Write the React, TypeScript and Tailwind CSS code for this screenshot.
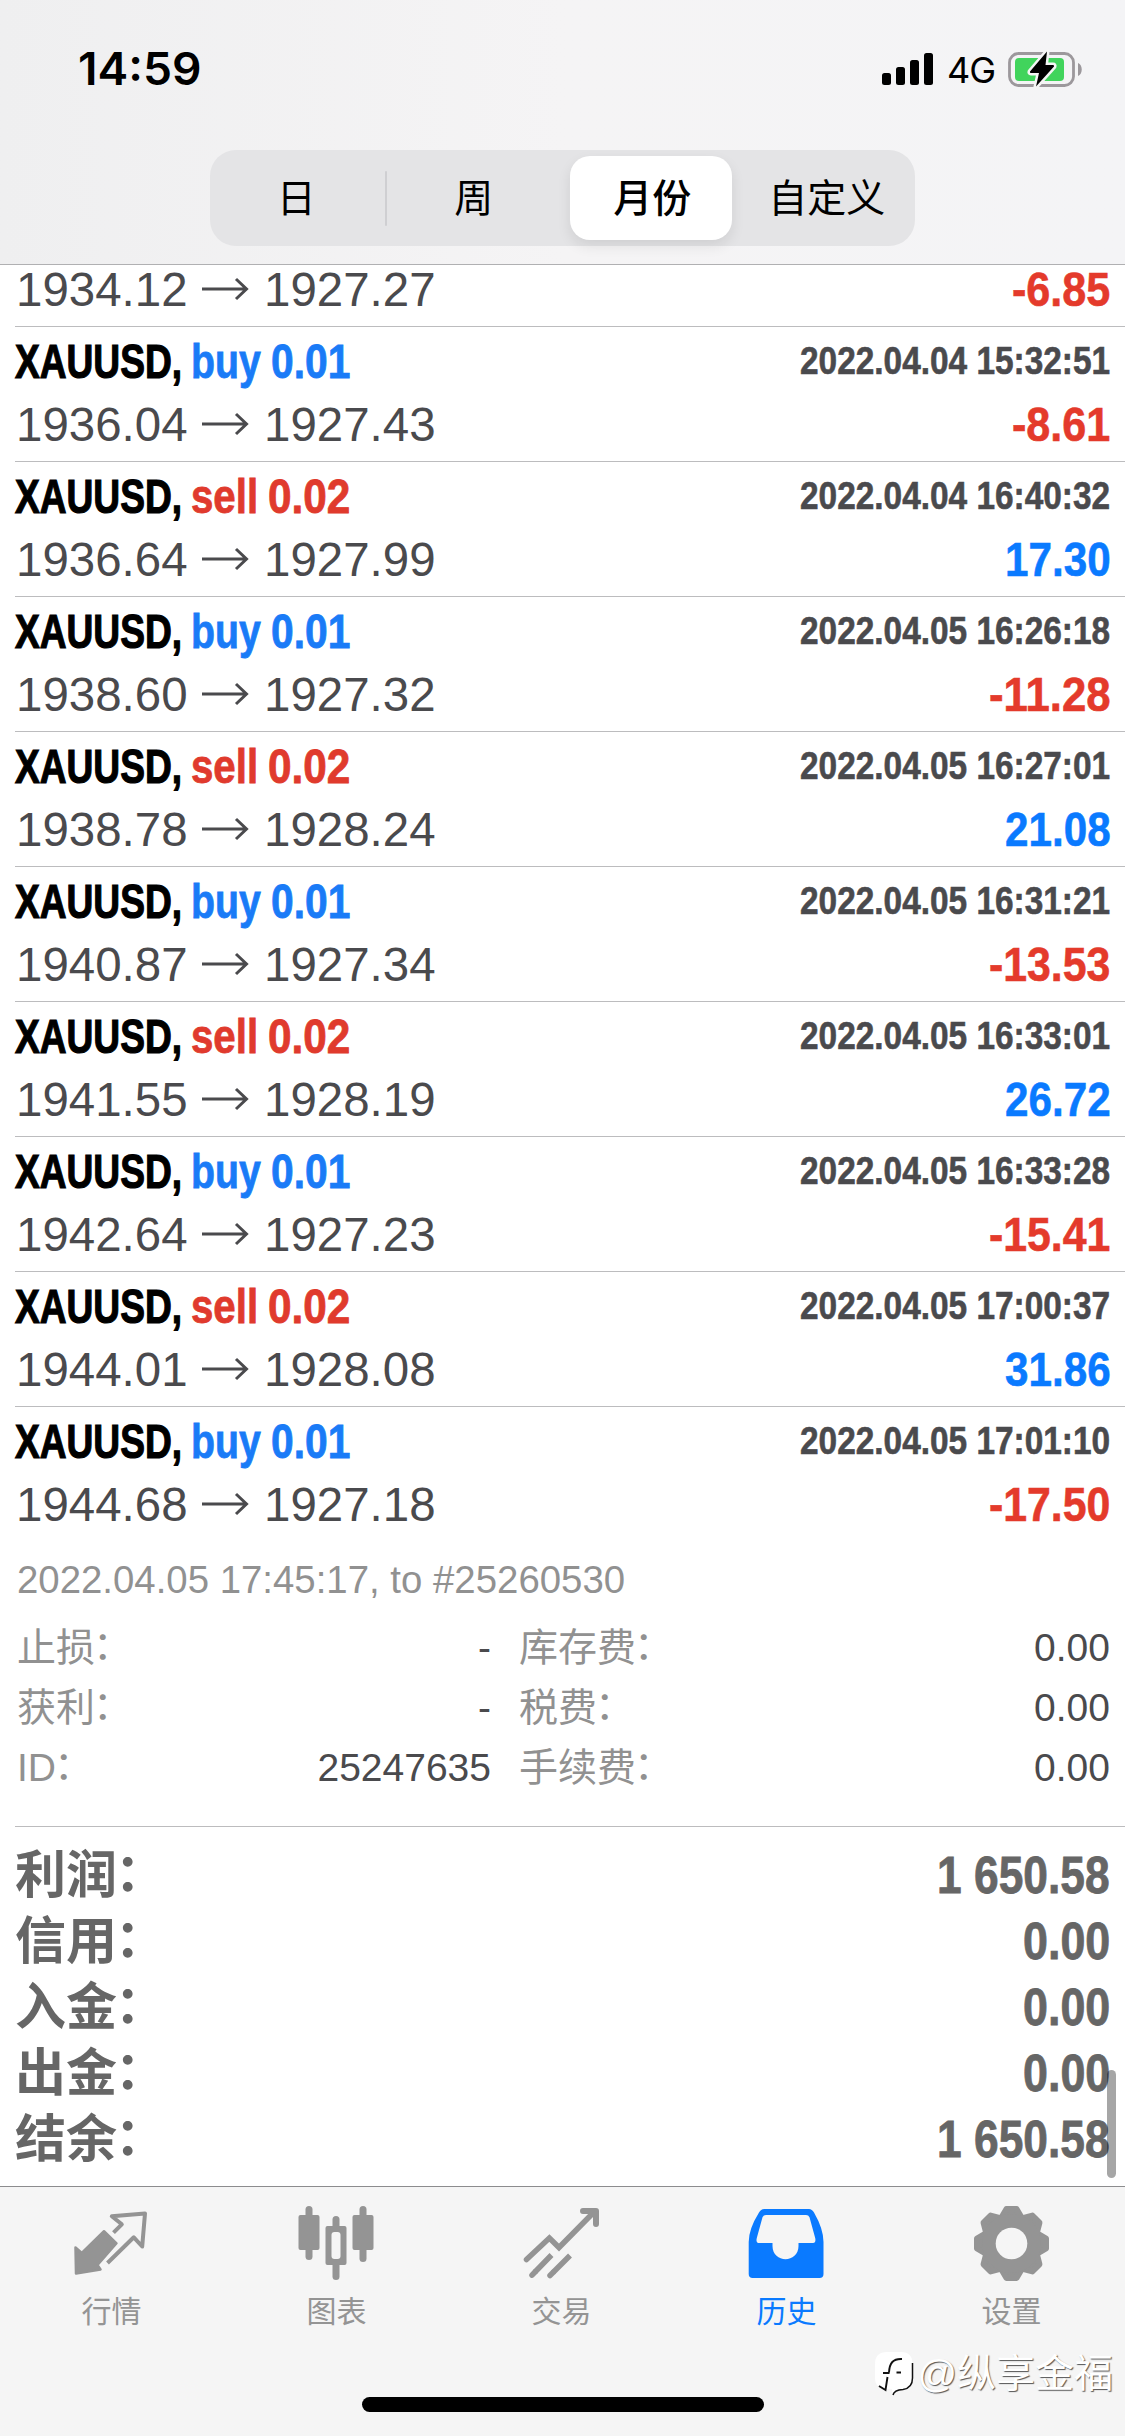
import { useLayoutEffect, useRef, useState } from "react";

type FitProps = { text: string; width: number; className?: string };

/** Condenses a run of text horizontally so that it takes exactly `width` pixels. */
function Fit({ text, width, className = "" }: FitProps) {
  const ref = useRef<HTMLSpanElement>(null);
  const [scale, setScale] = useState(1);
  useLayoutEffect(() => {
    if (ref.current) setScale(width / ref.current.offsetWidth);
  }, [text, width]);
  return (
    <span className="flex shrink-0" style={{ width }}>
      <span className={className} style={{ transform: `scaleX(${scale})`, transformOrigin: "left" }}>
        <span ref={ref} className="inline-block whitespace-pre">
          {text}
        </span>
      </span>
    </span>
  );
}

type Deal = { side: "buy" | "sell"; volume: string; time: string; open: string; close: string; profit: string };

const deals: Deal[] = [
  { side: "buy", volume: "0.01", time: "2022.04.04 15:32:51", open: "1936.04", close: "1927.43", profit: "-8.61" },
  { side: "sell", volume: "0.02", time: "2022.04.04 16:40:32", open: "1936.64", close: "1927.99", profit: "17.30" },
  { side: "buy", volume: "0.01", time: "2022.04.05 16:26:18", open: "1938.60", close: "1927.32", profit: "-11.28" },
  { side: "sell", volume: "0.02", time: "2022.04.05 16:27:01", open: "1938.78", close: "1928.24", profit: "21.08" },
  { side: "buy", volume: "0.01", time: "2022.04.05 16:31:21", open: "1940.87", close: "1927.34", profit: "-13.53" },
  { side: "sell", volume: "0.02", time: "2022.04.05 16:33:01", open: "1941.55", close: "1928.19", profit: "26.72" },
  { side: "buy", volume: "0.01", time: "2022.04.05 16:33:28", open: "1942.64", close: "1927.23", profit: "-15.41" },
  { side: "sell", volume: "0.02", time: "2022.04.05 17:00:37", open: "1944.01", close: "1928.08", profit: "31.86" },
  { side: "buy", volume: "0.01", time: "2022.04.05 17:01:10", open: "1944.68", close: "1927.18", profit: "-17.50" },
];

function profitWidth(profit: string) {
  const digits = profit.replace(/\D/g, "").length;
  return digits * 23.3 + 12.3 + (profit.startsWith("-") ? 15.7 : 0);
}

function Prices({ open, close, profit }: { open: string; close: string; profit: string }) {
  return (
    <div className="flex items-center justify-between">
      <div className="flex items-center pl-px text-[#4a4a4d]">
        <Fit text={open} width={172} />
        <svg className="mb-px ml-[13px] mr-[14px] h-[28px] w-[49px]" viewBox="0 0 49 28" fill="none" stroke="#4a4a4d" strokeWidth="3">
          <path d="M1 14H45.500M35 4L45.500 14L35 24" />
        </svg>
        <Fit text={close} width={172} />
      </div>
      <Fit
        text={profit}
        width={profitWidth(profit)}
        className={
          profit.startsWith("-")
            ? "font-bold text-[#e43a2b] [-webkit-text-stroke:0.6px_#e43a2b]"
            : "font-bold text-[#0a7aff] [-webkit-text-stroke:0.6px_#0a7aff]"
        }
      />
    </div>
  );
}

function DealRow({ deal, last }: { deal: Deal; last: boolean }) {
  const tone =
    deal.side === "buy"
      ? "font-bold text-[#1a7bf7] [-webkit-text-stroke:0.8px_#1a7bf7]"
      : "font-bold text-[#e03a2d] [-webkit-text-stroke:0.8px_#e03a2d]";
  return (
    <div className={last ? "ml-[15px] h-[135px] pr-[15px] pt-[3px]" : "ml-[15px] h-[135px] border-b border-[#bcbcbe] pr-[15px] pt-[3px]"}>
      <div className="flex h-[63px] items-start justify-between">
        <div className="flex text-[48px] leading-[63px]">
          <Fit text="XAUUSD," width={167} className="font-bold text-black [-webkit-text-stroke:1.2px_black]" />
          <span className="w-[9px]" />
          <Fit text={deal.side} width={deal.side === "buy" ? 69.5 : 67} className={tone} />
          <span className="w-[10px]" />
          <Fit text={deal.volume} width={deal.side === "buy" ? 79 : 82} className={tone} />
        </div>
        <Fit
          text={deal.time}
          width={310}
          className="text-[39px] font-bold leading-[61px] text-[#4a4a4d] [-webkit-text-stroke:0.6px_#4a4a4d]"
        />
      </div>
      <div className="text-[48px] leading-[63px]">
        <Prices open={deal.open} close={deal.close} profit={deal.profit} />
      </div>
    </div>
  );
}

function Label({ text, className = "" }: { text: string; className?: string }) {
  return (
    <span className={className}>
      {text}
      <span className="relative -left-[2px] -top-[2px]">：</span>
    </span>
  );
}

function DetailLine({ left, value, right, cost }: { left: string; value: string; right: string; cost: string }) {
  return (
    <div className="flex h-[60px] text-[39px] leading-[60px]">
      <div className="flex w-[474px] justify-between">
        <Label text={left} className="text-[#919191]" />
        <span className="text-[#4a4a4d]">{value}</span>
      </div>
      <div className="ml-[28px] flex flex-1 justify-between">
        <Label text={right} className="text-[#919191]" />
        <span className="text-[#4a4a4d]">{cost}</span>
      </div>
    </div>
  );
}

function TotalLine({ label, value }: { label: string; value: string }) {
  return (
    <div className="flex h-[66px] justify-between text-[51px] font-bold leading-[66px] text-[#666]">
      <Label text={label} />
      <Fit text={value} width={value.length > 4 ? 173 : 87} className="[-webkit-text-stroke:0.8px_#666]" />
    </div>
  );
}

function StatusBar() {
  return (
    <div className="flex h-[150px] justify-between pl-[78px] pr-[42px] pt-[39px]">
      <Fit text="14:59" width={123} className="font-[Inter] text-[45px] font-semibold leading-[60px]" />
      <div className="flex">
        <svg className="mt-[11px] h-[40px] w-[60px]" viewBox="0 0 60 40">
          <rect x="0" y="23" width="9" height="12" rx="2.5" />
          <rect x="14" y="17" width="9" height="18" rx="2.5" />
          <rect x="28" y="10" width="9" height="25" rx="2.5" />
          <rect x="42" y="3" width="9" height="32" rx="2.5" />
        </svg>
        <span className="ml-[5px] w-[61px] font-[Inter] text-[36px] leading-[62px] tracking-[-1px]">4G</span>
        <svg className="mt-[9px] h-[44px] w-[75px]" viewBox="0 0 75 44">
          <rect x="1.5" y="5.5" width="64" height="32" rx="9" fill="none" stroke="#9c989c" strokeWidth="2.8" />
          <path d="M70 15v13c5-2 5-11 0-13z" fill="#9c989c" />
          <rect x="7" y="10" width="49" height="23" rx="4" fill="#41d45c" />
          <path
            d="M39 3.500L22 23.500Q21.500 25 23 25H31L28 38.500L46 18.500Q46.500 17 45 17H37.500Z"
            fill="#000"
            stroke="#f5f5f5"
            strokeWidth="5"
            strokeLinejoin="round"
            paintOrder="stroke"
          />
        </svg>
      </div>
    </div>
  );
}

function Segments() {
  return (
    <div className="ml-[210px] flex h-24 w-[705px] items-center rounded-[26px] bg-[#e4e4e6] text-[39px]">
      <span className="w-[173px] pt-[2px] text-center">日</span>
      <span className="ml-[2px] h-[55px] w-[3px] rounded-full bg-[#cfcfd2]" />
      <span className="w-[172px] pl-px pt-[2px] text-center">周</span>
      <span className="ml-[11px] flex h-[84px] w-[162px] items-center justify-center rounded-[20px] bg-white pl-[3px] pt-[2px] font-medium shadow-[0_6px_14px_rgba(0,0,0,0.09)]">
        月份
      </span>
      <span className="ml-[7px] w-[177px] pt-[2px] text-center">自定义</span>
    </div>
  );
}

function QuotesIcon() {
  return (
    <svg className="h-20 w-[90px]" viewBox="0 0 90 80" fill="none" stroke="currentColor" strokeLinejoin="round">
      <path
        d="M8.500 47.500L14.800 53L37 31.200L49.500 43.300L30.500 65L33.500 69.500L9 73.500Z"
        fill="currentColor"
        strokeWidth="2.500"
      />
      <path d="M46.500 32.700L54.800 24.300L44.800 16.300L78 13.500L75.200 46.500L66.800 37.300L40.500 63" strokeWidth="4" />
    </svg>
  );
}

function ChartIcon() {
  return (
    <svg className="h-20 w-[90px]" viewBox="0 0 90 80" fill="currentColor">
      <rect x="6.500" y="15" width="21" height="35" rx="2" />
      <rect x="13.500" y="6" width="7" height="54" rx="3.500" />
      <rect x="60.500" y="15" width="21" height="35" rx="2" />
      <rect x="67.500" y="6" width="7" height="56" rx="3.500" />
      <rect x="40.500" y="16" width="7" height="64" rx="3.500" />
      <rect x="33.500" y="26" width="21" height="39" rx="2" />
      <rect x="39.500" y="32" width="9" height="27" rx="3" fill="#f5f5f5" />
    </svg>
  );
}

function TradeIcon() {
  return (
    <svg className="h-20 w-[90px]" viewBox="0 0 90 80" fill="none" stroke="currentColor" strokeWidth="5.500">
      <path d="M9.500 59.500L32.400 38L42 47.500L77 12" strokeLinecap="round" />
      <path d="M66 11H79V24" strokeWidth="6" strokeLinecap="round" strokeLinejoin="round" />
      <path d="M34.500 55L18 72M53 55.500L36 72.500" />
      <path d="M18 72L15 75.200M36 72.500L33 75.500" strokeLinecap="round" />
    </svg>
  );
}

function HistoryIcon() {
  return (
    <svg className="h-20 w-[90px]" viewBox="0 0 90 80" fill="currentColor" fillRule="evenodd">
      <path d="M22 9H67Q70 9 72 12.500Q81.500 29 81.500 42V74Q81.500 78 77.500 78H10.700Q6.700 78 6.700 74V42Q6.700 29 17 12.500Q19 9 22 9ZM24 15Q21.500 15 20.500 17.200L14.800 38Q13.500 43 17.500 43H30.500V46C30.500 63.500 56.500 63.500 56.500 46V43H71Q74.200 43 73.200 38L67.500 17.200Q66.500 15 64 15Z" />
    </svg>
  );
}

function SettingsIcon() {
  return (
    <svg className="h-20 w-[90px] overflow-visible" viewBox="0 0 90 80" fill="currentColor">
      <g transform="translate(44.500 43.500)">
        {[0, 45, 90, 135, 180, 225, 270, 315].map((angle) => (
          <path
            key={angle}
            d="M-10 -26L-5 -34.500H5L10 -26Z"
            stroke="currentColor"
            strokeWidth="6"
            strokeLinejoin="round"
            transform={`rotate(${angle})`}
          />
        ))}
        <circle r="29.500" />
        <circle r="15.800" fill="#f5f5f5" />
      </g>
    </svg>
  );
}

const tabs = [
  { label: "行情", Icon: QuotesIcon, active: false },
  { label: "图表", Icon: ChartIcon, active: false },
  { label: "交易", Icon: TradeIcon, active: false },
  { label: "历史", Icon: HistoryIcon, active: true },
  { label: "设置", Icon: SettingsIcon, active: false },
];

function Watermark() {
  return (
    <div className="absolute bottom-[36px] right-[12px] flex h-[52px] items-center">
      <svg className="h-[46px] w-[40px]" viewBox="0 0 40 46">
        <path
          d="M13 1H27Q38.500 1 38.500 13V27Q38.500 36 30 38.500L22 40Q19 42 18.500 45L18 38H14Q1 38 1 27V13Q1 1 13 1Z"
          fill="#fff"
        />
        <path d="M38.500 12V27Q38.500 37 29 38.500Q20 39 19 44" fill="none" stroke="#111" strokeWidth="1.500" />
        <path
          d="M28 8C19 7.500 15.500 12 15 21.500M9 22H15.500M22.500 21.500H27M13.500 26L11.500 39L5 35"
          fill="none"
          stroke="#111"
          strokeWidth="1.900"
        />
      </svg>
      <span className="ml-[3px] text-[39px] leading-[52px] text-white [text-shadow:1px_1px_1px_#555]">@纵享金福</span>
    </div>
  );
}

export default function App() {
  return (
    <div className="relative flex h-[2436px] w-[1125px] flex-col overflow-hidden bg-white font-['Liberation_Sans','Noto_Sans_CJK_SC',sans-serif] text-black">
      <header className="h-[265px] shrink-0 border-b border-[#b0b0b2] bg-linear-to-r from-[#efeff0] via-[#f5f4f5] to-[#f4f4f6]">
        <StatusBar />
        <Segments />
      </header>

      <main className="h-[1921px] shrink-0">
        <div className="ml-[15px] h-[62px] border-b border-[#bcbcbe] pr-[15px] text-[48px] leading-[49px]">
          <Prices open="1934.12" close="1927.27" profit="-6.85" />
        </div>
        {deals.map((deal, i) => (
          <DealRow key={deal.time} deal={deal} last={i === deals.length - 1} />
        ))}

        <section className="ml-[15px] h-[285px] border-b border-[#bcbcbe] pl-[2px] pr-[15px] pt-[8px]">
          <div className="mb-[8px] h-[60px] text-[39px] leading-[60px] text-[#919191]">
            <Fit text="2022.04.05 17:45:17, to #25260530" width={608} />
          </div>
          <DetailLine left="止损" value="-" right="库存费" cost="0.00" />
          <DetailLine left="获利" value="-" right="税费" cost="0.00" />
          <DetailLine left="ID" value="25247635" right="手续费" cost="0.00" />
        </section>

        <section className="ml-[15px] pr-[15px] pt-[16px]">
          <TotalLine label="利润" value="1 650.58" />
          <TotalLine label="信用" value="0.00" />
          <TotalLine label="入金" value="0.00" />
          <TotalLine label="出金" value="0.00" />
          <TotalLine label="结余" value="1 650.58" />
        </section>
      </main>

      <div className="absolute right-[9px] top-[2070px] h-[108px] w-[9px] rounded-full bg-black/35" />

      <footer className="h-[250px] shrink-0 border-t border-[#8c8c8e] bg-[#f5f5f5]">
        <nav className="-ml-px flex pt-[13px]">
          {tabs.map(({ label, Icon, active }) => (
            <div
              key={label}
              className={
                active
                  ? "flex w-[225px] flex-col items-center text-[#0a7aff]"
                  : "flex w-[225px] flex-col items-center text-[#949494]"
              }
            >
              <Icon />
              <span className="mt-[12px] text-[30px] leading-[40px]">{label}</span>
            </div>
          ))}
        </nav>
        <div className="mx-auto mt-[65px] h-[15px] w-[402px] rounded-full bg-black" />
      </footer>
      <Watermark />
    </div>
  );
}
